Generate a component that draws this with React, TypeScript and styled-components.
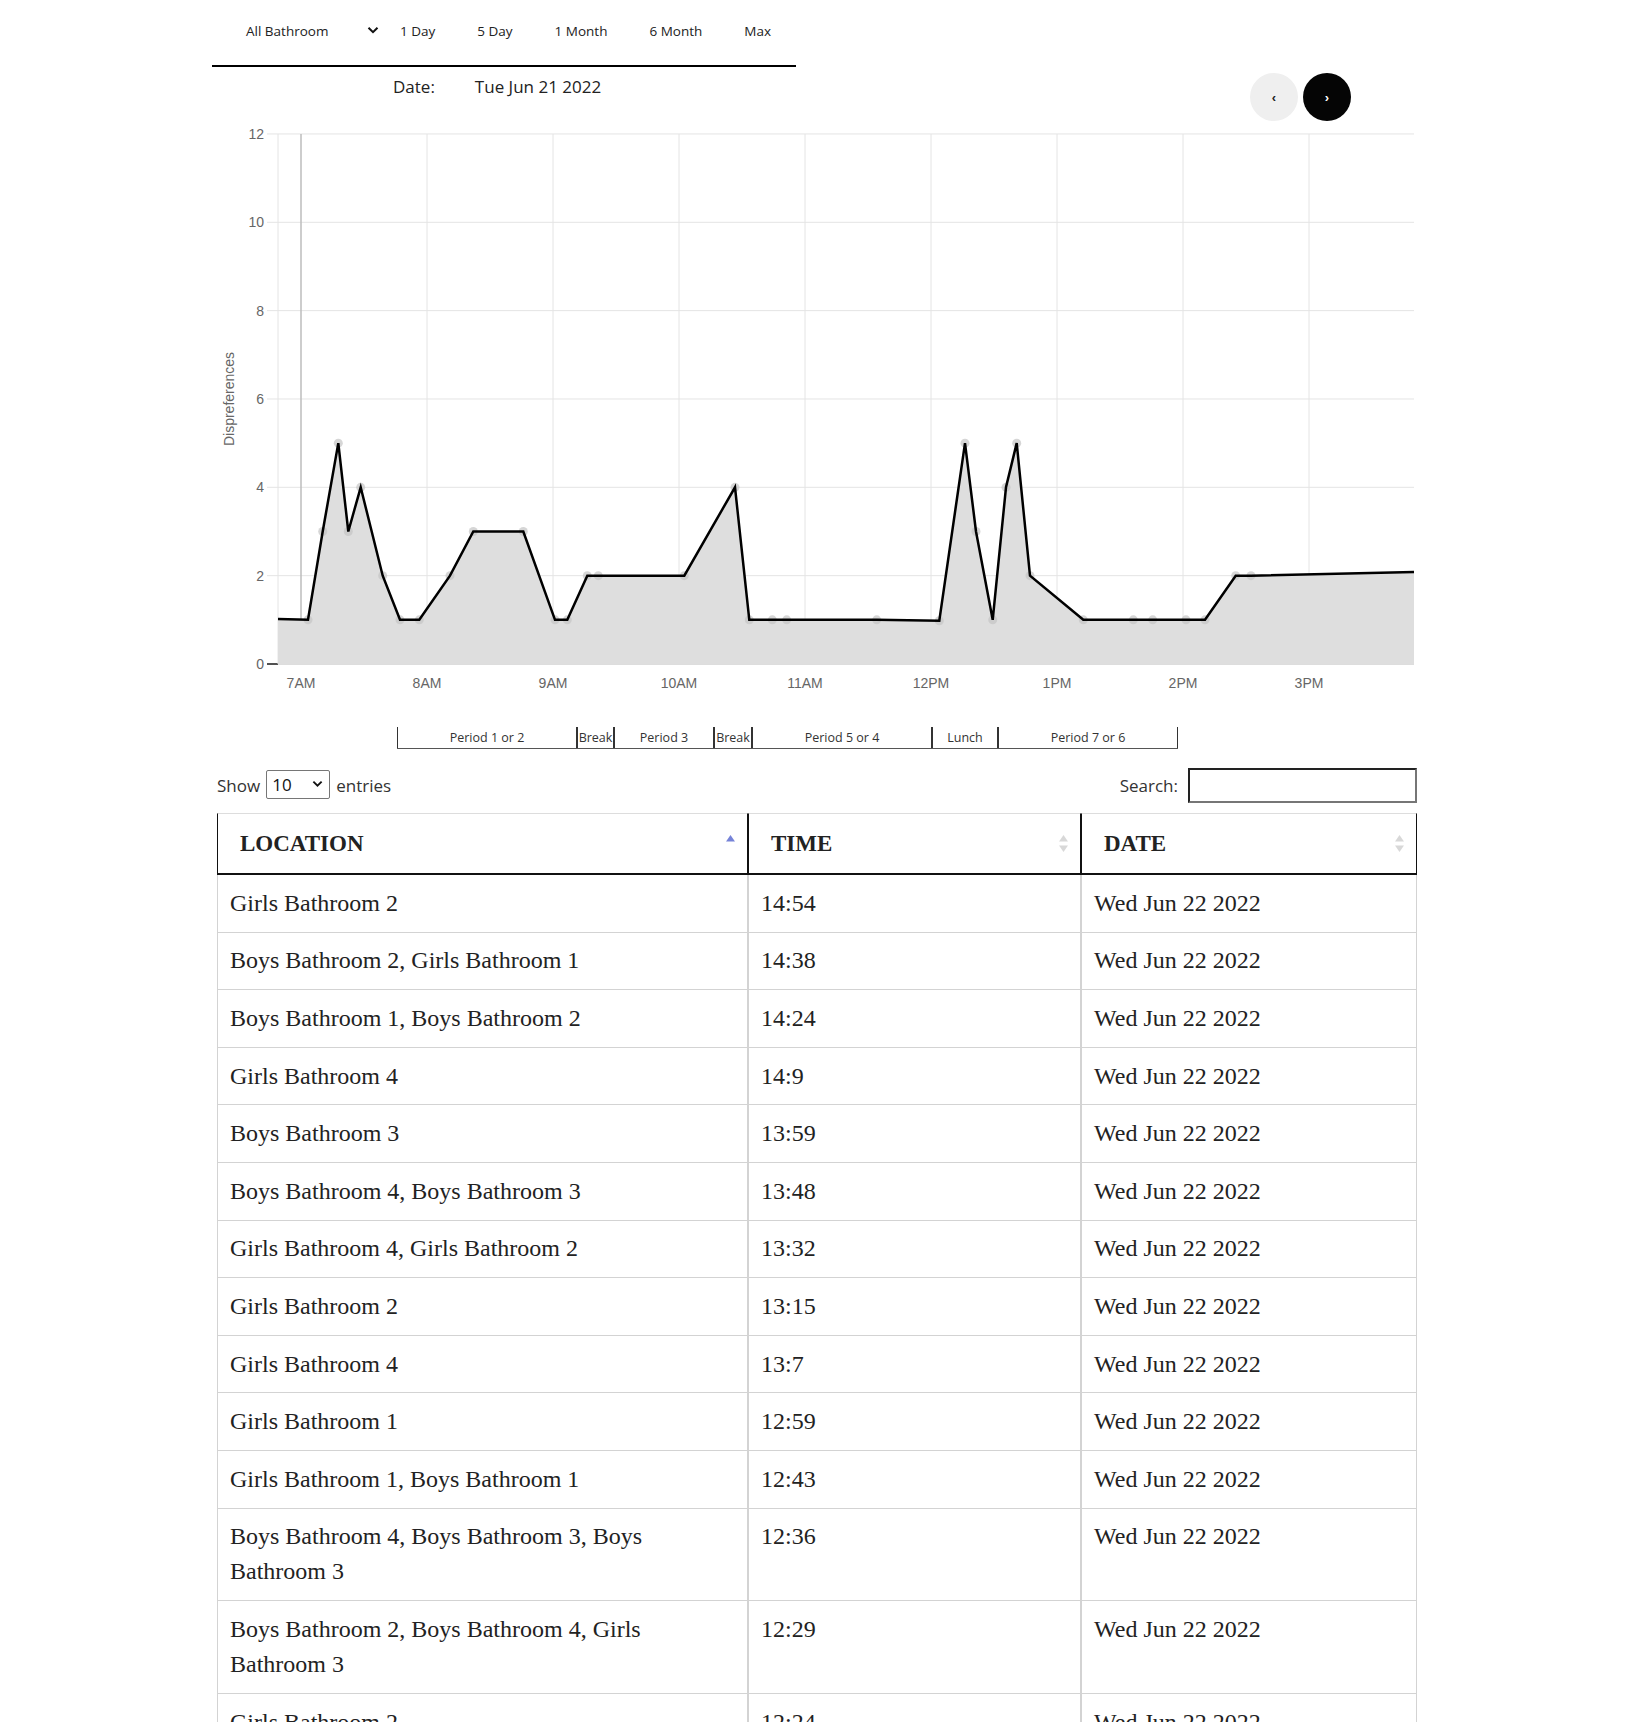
import React from 'react';
import styled, { createGlobalStyle } from 'styled-components';

const GlobalStyle = createGlobalStyle`
  body {
    margin: 0;
    font-family: "Open Sans", "Noto Sans", sans-serif;
    color: #222;
    background: #fff;
  }
`;

const Page = styled.div`
  height: 100vh;
  overflow: hidden;
`;

const Container = styled.div`
  width: 1206px;
  margin: 0 auto;
`;

const Nav = styled.nav`
  width: 584px;
  height: 61px;
  padding-bottom: 4px;
  border-bottom: 2px solid #000;
  display: flex;
  align-items: center;
`;

const RangeSelect = styled.div`
  width: 133px;
  margin-left: 34px;
  display: flex;
  align-items: center;
  justify-content: space-between;
  font-size: 13.5px;
  color: #222;
`;

const RangeButton = styled.button`
  background: none;
  border: none;
  padding: 0 21px;
  font-family: inherit;
  font-size: 13.5px;
  color: #222;
  cursor: pointer;
`;

const DateRow = styled.div`
  height: 54px;
  display: flex;
  justify-content: space-between;
  align-items: flex-start;
`;

const DateInfo = styled.div`
  margin-left: 181px;
  margin-top: 8px;
  display: flex;
  gap: 40px;
  font-size: 17px;
  line-height: 24px;
  color: #222;
`;

const Pager = styled.div`
  margin-top: 6px;
  margin-right: 67px;
  display: flex;
  gap: 5px;
`;

const RoundButton = styled.button<{ $dark?: boolean }>`
  width: 48px;
  height: 48px;
  border-radius: 50%;
  border: none;
  background: ${(p) => (p.$dark ? '#050505' : '#efefef')};
  color: ${(p) => (p.$dark ? '#fff' : '#222')};
  font-size: 13px;
  font-weight: 700;
  display: flex;
  align-items: center;
  justify-content: center;
  cursor: pointer;
`;

const ChartSvg = styled.svg`
  display: block;
  font-family: "Liberation Sans", Arial, sans-serif;
`;

const PeriodRow = styled.div`
  margin: 16px 0 0 185px;
  width: fit-content;
  display: flex;
  height: 21px;
  border-bottom: 1px solid #555;
`;

const PeriodCell = styled.div<{ $w: number }>`
  width: ${(p) => p.$w}px;
  box-sizing: border-box;
  border-left: 1px solid #333;
  border-right: 1px solid #333;
  display: flex;
  align-items: center;
  justify-content: center;
  font-size: 12.5px;
  color: #333;
  white-space: nowrap;
  overflow: visible;
`;

const Controls = styled.div`
  margin-top: 19px;
  height: 35px;
  padding: 0 1px 0 5px;
  display: flex;
  align-items: center;
  justify-content: space-between;
  font-size: 17px;
  color: #333;
`;

const Label = styled.label`
  display: flex;
  align-items: center;
`;

const EntriesSelect = styled.div`
  width: 64px;
  height: 29px;
  box-sizing: border-box;
  margin: -3px 6px 0;
  padding: 0 6px 0 5px;
  border: 1px solid #767676;
  border-radius: 2px;
  display: flex;
  align-items: center;
  justify-content: space-between;
  color: #111;
`;

const SearchInput = styled.input`
  width: 229px;
  height: 35px;
  box-sizing: border-box;
  margin-left: 10px;
  border: 2px solid;
  border-color: #222 #767676 #767676 #222;
  font-size: 16px;
`;

const Table = styled.table`
  margin: 10px 0 0 5px;
  width: 1200px;
  table-layout: fixed;
  border-collapse: separate;
  border-spacing: 0;
  font-family: "Liberation Serif", "Times New Roman", serif;
  color: #222;
`;

const Th = styled.th`
  padding: 12px 12px 12px 22px;
  text-align: left;
  font-size: 23px;
  line-height: 35px;
  font-weight: 700;
  border-top: 1px solid #ddd;
  border-bottom: 2px solid #111;
  border-left: 1px solid #111;
  border-right: 1px solid #111;
`;

const HeadInner = styled.div`
  display: flex;
  align-items: center;
  justify-content: space-between;
`;

const Td = styled.td`
  padding: 10.8px 12px;
  font-size: 24px;
  line-height: 35px;
  vertical-align: top;
  border-bottom: 1px solid #d3d3d3;
  border-left: 1px solid #d3d3d3;
  border-right: 1px solid #d3d3d3;
`;

const Chevron = ({ w = 12 }: { w?: number }) => (
  <svg width={w} height={w * 0.7} viewBox="0 0 12 8">
    <path d="M1.5 1.5 L6 6 L10.5 1.5" fill="none" stroke="#111" strokeWidth="2" />
  </svg>
);

const SortIcon = ({ active }: { active?: boolean }) => (
  <svg width="9" height="17" viewBox="0 0 9 17">
    <path d="M4.5 0 L9 6.5 L0 6.5 Z" fill={active ? '#7683d8' : '#d8d8d8'} />
    {!active && <path d="M0 10.5 L9 10.5 L4.5 17 Z" fill="#d8d8d8" />}
  </svg>
);

// chart geometry, svg coordinates
const PLOT_L = 66;
const PLOT_R = 1202;
const Y0 = 543;
const UNIT = 44.17;
const HOUR0 = 89;
const HOUR = 126;
const yOf = (v: number) => Y0 - v * UNIT;

const points: [number, number][] = [
  [66, 1.02], [96, 1], [110.7, 3], [126.3, 5], [136.3, 3], [148.7, 4], [170.7, 2],
  [188, 1], [207.3, 1], [238, 2], [261.3, 3], [311.3, 3], [343, 1], [355.3, 1],
  [375.3, 2], [386.3, 2], [472.3, 2], [523, 4], [537.3, 1], [560.3, 1], [574.7, 1],
  [664.7, 1], [727.3, 0.98], [753, 5], [764, 3], [780.7, 1], [794, 4], [804.7, 5],
  [818, 2], [871.3, 1], [921.3, 1], [940.7, 1], [974, 1], [993, 1], [1023.7, 2],
  [1039, 2], [1202, 2.08],
];

const hours = ['7AM', '8AM', '9AM', '10AM', '11AM', '12PM', '1PM', '2PM', '3PM'];

const Chart = () => {
  const line = points.map(([x, v], i) => `${i ? 'L' : 'M'}${x} ${yOf(v).toFixed(1)}`).join(' ');
  const area = `${line} L${PLOT_R} ${Y0} L${PLOT_L} ${Y0} Z`;
  return (
    <ChartSvg width={1206} height={590}>
      {[0, 2, 4, 6, 8, 10, 12].map((v) => (
        <g key={v}>
          <line x1={55} x2={PLOT_R} y1={yOf(v)} y2={yOf(v)} stroke={v ? '#e4e4e4' : '#bbb'} />
          <text x={52} y={yOf(v)} dy="5" textAnchor="end" fontSize="14" fill="#666">
            {v}
          </text>
        </g>
      ))}
      <line x1={55} x2={PLOT_L} y1={Y0} y2={Y0} stroke="#222" strokeWidth="1.5" />
      <line x1={PLOT_L} x2={PLOT_L} y1={yOf(12)} y2={Y0} stroke="#e4e4e4" />
      {hours.map((h, i) => (
        <g key={h}>
          <line
            x1={HOUR0 + i * HOUR}
            x2={HOUR0 + i * HOUR}
            y1={yOf(12)}
            y2={Y0}
            stroke={i ? '#e4e4e4' : '#bdbdbd'}
            strokeWidth={i ? 1 : 1.5}
          />
          <text x={HOUR0 + i * HOUR} y={567} textAnchor="middle" fontSize="14" fill="#666">
            {h}
          </text>
        </g>
      ))}
      <path d={area} fill="#dedede" />
      {points.slice(1, -1).map(([x, v], i) => (
        <circle key={i} cx={x} cy={yOf(v)} r={4.5} fill="#c4c4c4" opacity={0.7} />
      ))}
      <path d={line} fill="none" stroke="#000" strokeWidth="2.5" strokeLinejoin="miter" />
      <text
        transform="translate(22 278) rotate(-90)"
        textAnchor="middle"
        fontSize="14"
        fill="#666"
      >
        Dispreferences
      </text>
    </ChartSvg>
  );
};

const periods: [string, number][] = [
  ['Period 1 or 2', 180],
  ['Break', 37],
  ['Period 3', 100],
  ['Break', 38],
  ['Period 5 or 4', 180],
  ['Lunch', 66],
  ['Period 7 or 6', 180],
];

const rows: [string, string][] = [
  ['Girls Bathroom 2', '14:54'],
  ['Boys Bathroom 2, Girls Bathroom 1', '14:38'],
  ['Boys Bathroom 1, Boys Bathroom 2', '14:24'],
  ['Girls Bathroom 4', '14:9'],
  ['Boys Bathroom 3', '13:59'],
  ['Boys Bathroom 4, Boys Bathroom 3', '13:48'],
  ['Girls Bathroom 4, Girls Bathroom 2', '13:32'],
  ['Girls Bathroom 2', '13:15'],
  ['Girls Bathroom 4', '13:7'],
  ['Girls Bathroom 1', '12:59'],
  ['Girls Bathroom 1, Boys Bathroom 1', '12:43'],
  ['Boys Bathroom 4, Boys Bathroom 3, Boys Bathroom 3', '12:36'],
  ['Boys Bathroom 2, Boys Bathroom 4, Girls Bathroom 3', '12:29'],
  ['Girls Bathroom 2', '12:24'],
  ['Boys Bathroom 1', '12:18'],
];

export default function App() {
  return (
    <Page>
      <GlobalStyle />
      <Container>
        <Nav>
          <RangeSelect>
            <span>All Bathroom</span>
            <Chevron />
          </RangeSelect>
          <RangeButton>1 Day</RangeButton>
          <RangeButton>5 Day</RangeButton>
          <RangeButton>1 Month</RangeButton>
          <RangeButton>6 Month</RangeButton>
          <RangeButton>Max</RangeButton>
        </Nav>

        <DateRow>
          <DateInfo>
            <span>Date:</span>
            <span>Tue Jun 21 2022</span>
          </DateInfo>
          <Pager>
            <RoundButton>‹</RoundButton>
            <RoundButton $dark>›</RoundButton>
          </Pager>
        </DateRow>

        <Chart />

        <PeriodRow>
          {periods.map(([name, w], i) => (
            <PeriodCell key={i} $w={w}>
              {name}
            </PeriodCell>
          ))}
        </PeriodRow>

        <Controls>
          <Label>
            Show
            <EntriesSelect>
              <span>10</span>
              <Chevron w={11} />
            </EntriesSelect>
            entries
          </Label>
          <Label>
            Search:
            <SearchInput type="text" />
          </Label>
        </Controls>

        <Table>
          <colgroup>
            <col style={{ width: 531 }} />
            <col style={{ width: 333 }} />
            <col style={{ width: 336 }} />
          </colgroup>
          <thead>
            <tr>
              <Th>
                <HeadInner>
                  LOCATION <SortIcon active />
                </HeadInner>
              </Th>
              <Th>
                <HeadInner>
                  TIME <SortIcon />
                </HeadInner>
              </Th>
              <Th>
                <HeadInner>
                  DATE <SortIcon />
                </HeadInner>
              </Th>
            </tr>
          </thead>
          <tbody>
            {rows.map(([loc, time], i) => (
              <tr key={i}>
                <Td>{loc}</Td>
                <Td>{time}</Td>
                <Td>Wed Jun 22 2022</Td>
              </tr>
            ))}
          </tbody>
        </Table>
      </Container>
    </Page>
  );
}
